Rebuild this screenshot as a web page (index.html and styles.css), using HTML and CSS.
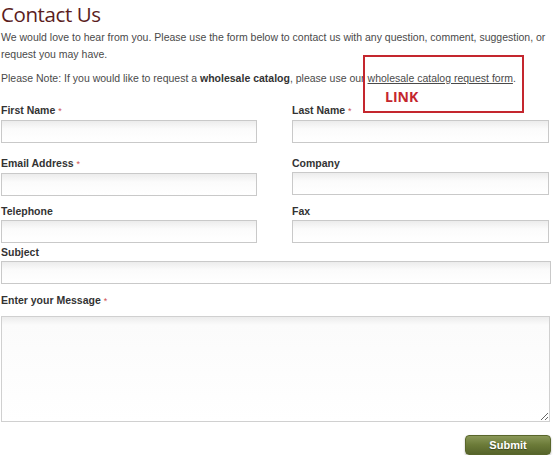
FILE: index.html
```html
<!DOCTYPE html>
<html>
<head>
    <title>Contact Us</title>
    <link rel="stylesheet" href="styles.css">
</head>
<body>
    <div class="page">
        <h1>Contact Us</h1>

        <p class="intro">We would love to hear from you. Please use the form below to contact us with any question, comment, suggestion, or request you may have.</p>

        <p class="note">Please Note: If you would like to request a <strong>wholesale catalog</strong>, please use our <a href="#">wholesale catalog request form</a>.</p>

        <div class="callout"><span>LINK</span></div>

        <form class="contact-form">
            <div class="row row-first">
                <div class="field">
                    <label>First Name <span class="req">*</span></label>
                    <input type="text">
                </div>
                <div class="field">
                    <label>Last Name <span class="req">*</span></label>
                    <input type="text">
                </div>
            </div>

            <div class="row row-second">
                <div class="field">
                    <label>Email Address <span class="req">*</span></label>
                    <input type="text">
                </div>
                <div class="field">
                    <label>Company</label>
                    <input type="text">
                </div>
            </div>

            <div class="row row-third">
                <div class="field">
                    <label>Telephone</label>
                    <input type="text">
                </div>
                <div class="field">
                    <label>Fax</label>
                    <input type="text">
                </div>
            </div>

            <div class="field field-subject">
                <label>Subject</label>
                <input type="text" class="wide">
            </div>

            <div class="field field-message">
                <label>Enter your Message <span class="req">*</span></label>
                <textarea></textarea>
            </div>

            <div class="actions">
                <button type="button" class="submit">Submit</button>
            </div>
        </form>
    </div>
</body>
</html>
```

FILE: styles.css
```css
body {
    margin: 0;
    background-color: #fff;
    font-family: "Liberation Sans", Arial, sans-serif;
    font-size: 10.5px;
    color: #4a4a4a;
}

.page {
    position: relative;
    padding: 0 1px;
}

h1 {
    margin: 0;
    font-family: "Open Sans", sans-serif;
    font-size: 20.5px;
    font-weight: normal;
    letter-spacing: -0.4px;
    line-height: 28px;
    color: #5b1d1e;
}

.intro {
    margin: 1px 0 0;
    line-height: 17px;
}

.note {
    margin: 7px 0 0;
    line-height: 17px;
}

.note strong {
    color: #333;
}

.note a {
    color: #4a4a4a;
    text-decoration: underline;
}

/* red annotation drawn over the page */
.callout {
    position: absolute;
    left: 363px;
    top: 55px;
    width: 157px;
    height: 54px;
    border: 2px solid #c4262e;
}

.callout span {
    position: absolute;
    left: 20px;
    top: 32px;
    font-family: "Open Sans", sans-serif;
    font-size: 14px;
    font-weight: bold;
    color: #c4262e;
    line-height: 16px;
}

.contact-form {
    margin: 16px 0 0;
}

.row {
    display: grid;
    grid-template-columns: 256px 257px;
    column-gap: 35px;
}

.row-second {
    margin-top: 13px;
}

.row-third {
    margin-top: 8px;
}

.field label {
    display: block;
    font-size: 10.5px;
    font-weight: bold;
    line-height: 14px;
    color: #333;
    margin-bottom: 2px;
}

.req {
    color: #d05050;
    font-weight: normal;
    font-size: 9px;
}

.field input,
.field textarea {
    display: block;
    box-sizing: border-box;
    width: 100%;
    height: 23px;
    margin: 0;
    padding: 3px 4px;
    border: 1px solid #c9c9c9;
    background: linear-gradient(#ececec, #fbfbfb 8px, #fff);
    font-family: "Liberation Sans", Arial, sans-serif;
    font-size: 12px;
}

.field-subject {
    margin-top: 2px;
}

.field-subject input {
    width: 550px;
}

.field-message {
    margin-top: 9px;
}

.field-message label {
    margin-bottom: 8px;
}

.field-message textarea {
    width: 549px;
    height: 106px;
    border-color: #d0d0d0;
}

.actions {
    display: flex;
    justify-content: flex-end;
    width: 550px;
    margin-top: 13px;
}

.submit {
    width: 86px;
    height: 20px;
    padding: 0;
    border: 1px solid #59662b;
    border-radius: 4px;
    background: linear-gradient(#8a9858, #6b7a38 50%, #56642a);
    color: #fff;
    font-family: "Liberation Sans", Arial, sans-serif;
    font-size: 11px;
    font-weight: bold;
    text-shadow: 0 1px 1px rgba(0, 0, 0, 0.4);
    box-shadow: 0 1px 2px rgba(0, 0, 0, 0.3);
    cursor: pointer;
}
```
